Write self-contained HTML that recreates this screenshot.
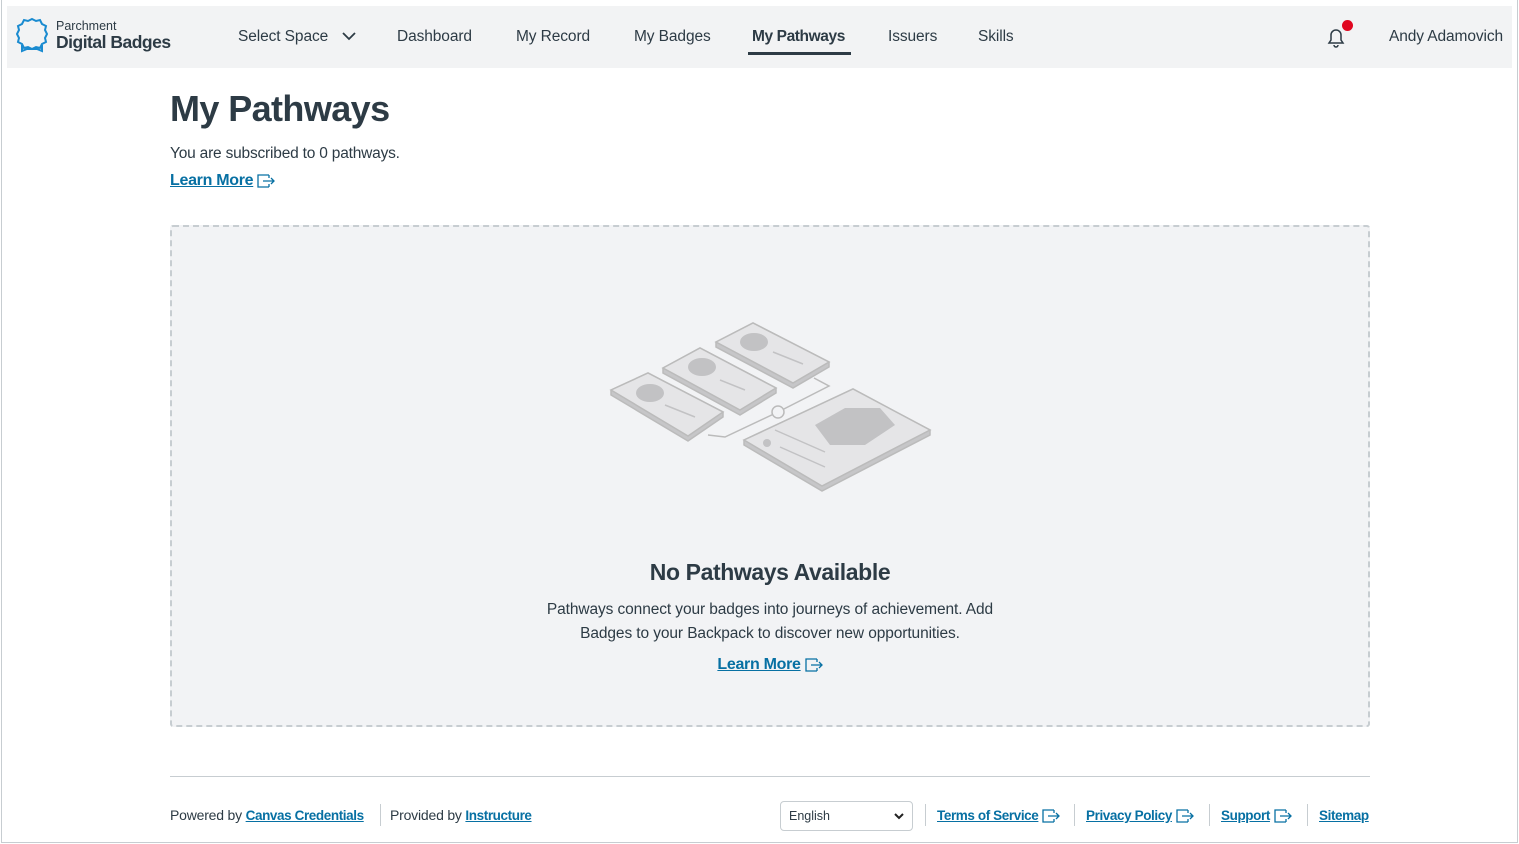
<!DOCTYPE html>
<html><head><meta charset="utf-8"><style>
*{box-sizing:border-box;margin:0;padding:0}
body{width:1519px;height:844px;background:#fff;font-family:"Liberation Sans",sans-serif;color:#2d3b45;position:relative;overflow:hidden}
.frame{position:absolute;left:1px;top:0;width:1517px;height:843px;border:1px solid #c7cdd1;border-top:none}
.hdr{position:absolute;left:7px;top:6px;width:1505px;height:62px;background:#f2f3f4}
.nav{position:absolute;top:28px;font-size:15.5px;color:#2d3b45;letter-spacing:-.1px}
a{color:#0770a3;text-decoration:underline}
.lm{font-size:16px;font-weight:bold;color:#0770a3;letter-spacing:-.3px}
.box{position:absolute;left:170px;top:225px;width:1200px;height:502px;background:#f2f3f5;border:2px dashed #c7cdd1;border-radius:3px}
.foot{position:absolute;top:807px;font-size:14px;color:#2d3b45;letter-spacing:-.2px}
.sep{position:absolute;top:804px;width:1px;height:22px;background:#c7cdd1}
.fl{font-weight:bold;color:#0770a3;font-size:13.5px;letter-spacing:-.4px}
.ex{display:inline-block;vertical-align:middle;margin-left:4px}
</style></head><body>
<svg width="0" height="0" style="position:absolute"><defs><symbol id="ex" viewBox="0 0 18 14"><path d="M12 1H1v12h11M12 4v-3M12 10v3M6 7h11M14 4l3 3-3 3" fill="none" stroke="#0770a3" stroke-width="1.3"/></symbol></defs></svg>
<div class="frame"></div>
<div class="hdr"></div>
<svg style="position:absolute;left:16px;top:17px" width="32" height="36" viewBox="0 0 32 36"><path d="M16 2 l4 2 4-1 2 4 4 2-1 4 2 4-2 4 1 4-4 2-2 4-4-1-4 2-4-2-4 1-2-4-4-2 1-4-2-4 2-4-1-4 4-2 2-4 4 1z" fill="none" stroke="#1a8bd0" stroke-width="2"/><path d="M6 28v6l5-2h10l5 2v-6" fill="none" stroke="#1a8bd0" stroke-width="2"/></svg>
<div style="position:absolute;left:56px;top:19px;font-size:12.5px;color:#2d3b45">Parchment</div>
<div style="position:absolute;left:56px;top:32px;font-size:17.5px;color:#2d3b45;font-weight:bold;letter-spacing:-.5px">Digital Badges</div>
<div class="nav" style="left:238px">Select Space</div>
<svg style="position:absolute;left:342px;top:32px" width="14" height="10"><path d="M1 1l6 6 6-6" fill="none" stroke="#2d3b45" stroke-width="1.8"/></svg>
<div class="nav" style="left:397px">Dashboard</div>
<div class="nav" style="left:516px">My Record</div>
<div class="nav" style="left:634px">My Badges</div>
<div class="nav" style="left:752px;font-weight:bold;letter-spacing:-.4px">My Pathways</div>
<div style="position:absolute;left:748px;top:52px;width:103px;height:3px;background:#2d3b45"></div>
<div class="nav" style="left:888px">Issuers</div>
<div class="nav" style="left:978px">Skills</div>
<svg style="position:absolute;left:1324px;top:25px" width="24" height="24" viewBox="0 0 24 24"><path d="M5 18h14l-2-3v-5a5 5 0 0 0-10 0v5z M10 20a2 2 0 0 0 4 0" fill="none" stroke="#2d3b45" stroke-width="1.5"/></svg>
<div style="position:absolute;left:1342px;top:20px;width:11px;height:11px;border-radius:50%;background:#e0061f"></div>
<div class="nav" style="left:1389px">Andy Adamovich</div>
<div style="position:absolute;left:170px;top:88px;font-size:36px;font-weight:bold;color:#2d3b45;letter-spacing:-.6px">My Pathways</div>
<div style="position:absolute;left:170px;top:145px;font-size:15.5px;letter-spacing:-.2px">You are subscribed to 0 pathways.</div>
<div style="position:absolute;left:170px;top:172px"><a class="lm">Learn More</a><svg class="ex" width="18" height="14"><use href="#ex"/></svg></div>
<div class="box"></div>
<svg style="position:absolute;left:600px;top:315px" width="340" height="180" viewBox="600 315 340 180" fill="#e5e5e7" stroke="#bbb" stroke-width="1.5">
<path d="M814 378l15 8-51 26M708 435l17 2 53-25" fill="none"/>
<circle cx="778" cy="412" r="6" fill="#f2f3f5"/>
<g fill="#c6c6c8"><polygon points="611,390 648,373 723,412 723,417 688,441 611,395"/><polygon points="663,368 700,348 776,388 776,393 740,415 663,373"/><polygon points="716,342 753,323 829,362 829,367 793,388 716,347"/><polygon points="744,440 853,389 930,430 930,435 822,491 744,445"/></g>
<polygon points="611,390 648,373 723,412 688,436"/>
<polygon points="663,368 700,348 776,388 740,410"/>
<polygon points="716,342 753,323 829,362 793,383"/>
<polygon points="744,440 853,389 930,430 822,486"/>
<g fill="#c2c2c4" stroke="none"><ellipse cx="650" cy="393" rx="14" ry="9"/><ellipse cx="702" cy="367" rx="14" ry="9"/><ellipse cx="754" cy="342" rx="14" ry="9"/><polygon points="815,425 845,408 880,408 895,425 865,445 830,445"/><circle cx="767" cy="443" r="4"/></g>
<path d="M665 405l30 12M720 380l25 10M773 352l30 12M775 430l50 22M780 447l45 20" fill="none" stroke="#c2c2c4"/>
</svg>
<div style="position:absolute;left:170px;top:559px;width:1200px;text-align:center;font-size:23px;font-weight:bold;color:#2d3b45;letter-spacing:-.4px">No Pathways Available</div>
<div style="position:absolute;left:170px;top:598px;width:1200px;text-align:center;font-size:15.5px;line-height:24px;letter-spacing:-.1px">Pathways connect your badges into journeys of achievement. Add<br>Badges to your Backpack to discover new opportunities.</div>
<div style="position:absolute;left:170px;top:656px;width:1200px;text-align:center"><a class="lm">Learn More</a><svg class="ex" width="18" height="14"><use href="#ex"/></svg></div>
<div style="position:absolute;left:170px;top:776px;width:1200px;height:1px;background:#c7cdd1"></div>
<div class="foot" style="left:170px">Powered by <a class="fl">Canvas Credentials</a></div>
<div class="sep" style="left:380px"></div>
<div class="foot" style="left:390px">Provided by <a class="fl">Instructure</a></div>
<div style="position:absolute;left:780px;top:801px;width:133px;height:30px;border:1px solid #c7cdd1;border-radius:4px;font-size:12.5px;padding:7px 8px">English<svg style="position:absolute;right:8px;top:11px" width="10" height="7"><path d="M1 1l4 4 4-4" fill="none" stroke="#222" stroke-width="2"/></svg></div>
<div class="sep" style="left:925px"></div>
<div class="foot" style="left:937px"><a class="fl">Terms of Service</a><svg class="ex" width="18" height="14"><use href="#ex"/></svg></div>
<div class="sep" style="left:1074px"></div>
<div class="foot" style="left:1086px"><a class="fl">Privacy Policy</a><svg class="ex" width="18" height="14"><use href="#ex"/></svg></div>
<div class="sep" style="left:1209px"></div>
<div class="foot" style="left:1221px"><a class="fl">Support</a><svg class="ex" width="18" height="14"><use href="#ex"/></svg></div>
<div class="sep" style="left:1307px"></div>
<div class="foot" style="left:1319px"><a class="fl">Sitemap</a></div>
</body></html>
